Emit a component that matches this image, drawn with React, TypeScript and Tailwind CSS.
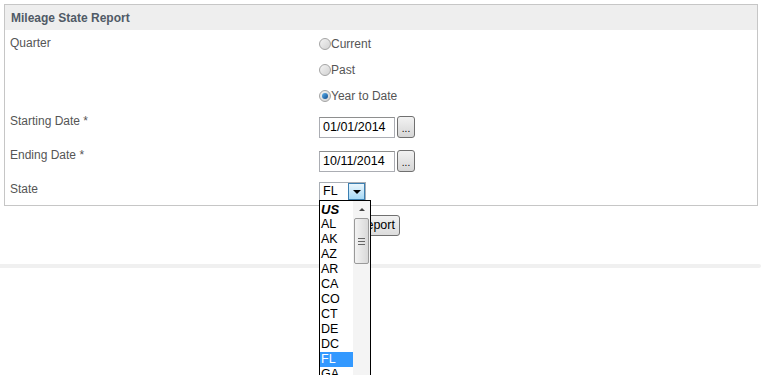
const states = ['AL', 'AK', 'AZ', 'AR', 'CA', 'CO', 'CT', 'DE', 'DC', 'FL', 'GA', 'HI'];

function Radio({ label, checked }: { label: string; checked?: boolean }) {
  return (
    <div className="flex h-[26px] items-center">
      <span className="flex h-[12px] w-[12px] items-center justify-center rounded-full border border-[#a4a4a4] bg-gradient-to-br from-[#f4f4f4] to-[#d2d2d2]">
        {checked && (
          <span className="h-[6px] w-[6px] rounded-full bg-gradient-to-br from-[#5fb3ee] to-[#0c4a8c]" />
        )}
      </span>
      <span className="text-[12px] text-[#555]">{label}</span>
    </div>
  );
}

function DateField({ value }: { value: string }) {
  return (
    <div className="flex items-center gap-[2px]">
      <div className="flex h-[21px] w-[76px] items-center border border-[#abadb3] border-t-[#8e8f8f] bg-white pl-[3px] text-[12.5px] text-black">
        {value}
      </div>
      <button className="flex h-[22px] w-[18px] items-end justify-center rounded-[3px] border border-[#707070] bg-gradient-to-b from-[#f2f2f2] to-[#d6d6d6] pb-[3px] text-[10px] leading-none text-black">
        ...
      </button>
    </div>
  );
}

export default function App() {
  return (
    <div className="relative h-[375px] w-[761px] overflow-hidden bg-white font-['Liberation_Sans',Arial,sans-serif]">
      {/* Report box */}
      <div className="ml-[4px] mt-[4px] w-[754px] border border-[#c6c6c6]">
        <div className="flex h-[25px] items-center bg-[#eeeeee] pl-[6px] text-[12px] font-bold text-[#505a66]">
          Mileage State Report
        </div>

        <div className="grid grid-cols-[309px_1fr] pl-[5px]">
          {/* Quarter */}
          <div className="h-[79px] pt-[6px] text-[12px] leading-[14px] text-[#555]">Quarter</div>
          <div className="pt-[1px]">
            <Radio label="Current" />
            <Radio label="Past" />
            <Radio label="Year to Date" checked />
          </div>

          {/* Starting date */}
          <div className="h-[34px] pt-[5px] text-[12px] leading-[14px] text-[#555]">Starting Date *</div>
          <div className="pt-[7px]">
            <DateField value="01/01/2014" />
          </div>

          {/* Ending date */}
          <div className="h-[34px] pt-[5px] text-[12px] leading-[14px] text-[#555]">Ending Date *</div>
          <div className="pt-[7px]">
            <DateField value="10/11/2014" />
          </div>

          {/* State */}
          <div className="h-[28px] pt-[5px] text-[12px] leading-[14px] text-[#555]">State</div>
          <div className="pt-[5px]">
            <div className="flex h-[19px] w-[47px] border border-[#a9aeb5] bg-white">
              <span className="flex-1 pl-[3px] text-[12.5px] leading-[17px] text-black">FL</span>
              <span className="flex w-[17px] items-center justify-center border border-[#3c7fb1] bg-gradient-to-b from-[#eaf6fd] to-[#a7d9f5]">
                <span className="h-0 w-0 border-x-[4px] border-t-[4px] border-x-transparent border-t-black" />
              </span>
            </div>
          </div>
        </div>
      </div>

      <div className="ml-[326px] mt-[6px]">
        <button className="h-[21px] rounded-[3px] border border-[#707070] bg-gradient-to-b from-[#f2f2f2] to-[#dcdcdc] px-[4px] text-[12.5px] leading-none text-black">
          Run Report
        </button>
      </div>

      <div className="mt-[28px] h-[4px] w-full rounded-r-sm bg-[#f0f0f0]" />

      {/* Open state list */}
      <div className="absolute left-[319px] top-[200px] flex h-[190px] w-[52px] border border-black bg-white">
        <div className="flex-1 pt-[1px]">
          <div className="h-[15px] pl-[1px] text-[13px] font-bold italic leading-[15px] text-black">US</div>
          {states.map((s) => (
            <div
              key={s}
              className={`h-[15px] pl-[1px] text-[12.5px] leading-[15px] ${
                s === 'FL' ? 'bg-[#3399ff] text-white' : 'text-black'
              }`}
            >
              {s}
            </div>
          ))}
        </div>
        <div className="flex w-[17px] flex-col items-center bg-[#f4f4f4]">
          <div className="flex h-[17px] items-center justify-center">
            <span className="h-0 w-0 border-x-[3px] border-b-[3px] border-x-transparent border-b-[#444]" />
          </div>
          <div className="flex h-[46px] w-[15px] flex-col items-center justify-center gap-[2px] rounded-[2px] border border-[#9a9a9a] bg-gradient-to-r from-[#f3f3f3] to-[#d9d9d9]">
            <span className="h-px w-[7px] bg-[#666]" />
            <span className="h-px w-[7px] bg-[#666]" />
            <span className="h-px w-[7px] bg-[#666]" />
          </div>
        </div>
      </div>
    </div>
  );
}
